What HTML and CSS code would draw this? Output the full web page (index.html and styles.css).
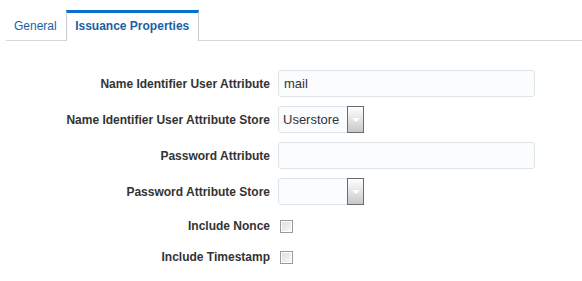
FILE: index.html
```html
<!DOCTYPE html>
<html lang="en">
<head>
    <meta charset="UTF-8">
    <title>Issuance Properties</title>
    <link rel="stylesheet" href="styles.css">
</head>
<body>
    <div class="tab-bar">
        <a class="tab">General</a>
        <a class="tab active">Issuance Properties</a>
    </div>

    <form class="props-form">
        <label class="field-label">Name Identifier User Attribute</label>
        <div class="field"><input type="text" class="text-input" value="mail"></div>

        <label class="field-label">Name Identifier User Attribute Store</label>
        <div class="field">
            <div class="select-box">
                <span class="select-value">Userstore</span>
                <span class="select-btn"></span>
            </div>
        </div>

        <label class="field-label">Password Attribute</label>
        <div class="field"><input type="text" class="text-input" value=""></div>

        <label class="field-label">Password Attribute Store</label>
        <div class="field">
            <div class="select-box">
                <span class="select-value"></span>
                <span class="select-btn"></span>
            </div>
        </div>

        <label class="field-label">Include Nonce</label>
        <div class="field"><span class="check-box"></span></div>

        <label class="field-label">Include Timestamp</label>
        <div class="field"><span class="check-box"></span></div>
    </form>
</body>
</html>
```

FILE: styles.css
```css
* {
    box-sizing: border-box;
    margin: 0;
    padding: 0;
}

body {
    background-color: #fff;
    color: #333;
    font-family: 'Liberation Sans', Arial, sans-serif;
    font-size: 12px;
}

.tab-bar {
    display: flex;
    align-items: flex-end;
    margin-left: 6px;
    padding-top: 10px;
    height: 41px;
    border-bottom: 1px solid #d0d7de;
}

.tab {
    display: block;
    height: 30px;
    padding: 3px 9px 0 8px;
    line-height: 27px;
    color: #1a5fa3;
    font-size: 12px;
    text-decoration: none;
}

.tab.active {
    width: 133px;
    height: 31px;
    margin-bottom: -1px;
    padding: 0 8px;
    background-color: #fff;
    border-top: 3px solid #0572ce;
    border-left: 1px solid #c4ccd4;
    border-right: 1px solid #c4ccd4;
    font-weight: bold;
    line-height: 27px;
    text-align: center;
}

.props-form {
    display: grid;
    grid-template-columns: 270px 1fr;
    grid-template-rows: repeat(4, 27px) 24px 20px;
    column-gap: 8px;
    row-gap: 9px;
    align-items: center;
    padding-top: 29px;
}

.field-label {
    text-align: right;
    font-weight: bold;
    color: #333;
}

.field {
    display: flex;
    align-items: center;
    height: 100%;
}

.text-input {
    width: 257px;
    height: 27px;
    padding: 0 5px;
    border: 1px solid #dfe4e8;
    border-radius: 3px;
    background-color: #fbfcfe;
    color: #333;
    font-family: 'Liberation Sans', Arial, sans-serif;
    font-size: 13px;
    outline: none;
}

.select-box {
    display: flex;
    width: 86px;
    height: 27px;
    border: 1px solid #dfe4e8;
    border-radius: 3px;
    background-color: #fbfcfe;
}

.select-value {
    flex-grow: 1;
    padding-left: 4px;
    line-height: 25px;
    font-size: 13px;
    color: #333;
}

.select-btn {
    position: relative;
    width: 17px;
    margin: -1px -1px -1px 0;
    border: 1px solid #6b6b6b;
    background: linear-gradient(#ffffff, #c8c8c8);
}

.select-btn::after {
    content: '';
    position: absolute;
    left: 4px;
    top: 11px;
    border-left: 4px solid transparent;
    border-right: 4px solid transparent;
    border-top: 4px solid #fff;
}

.check-box {
    display: block;
    width: 13px;
    height: 13px;
    margin-left: 2px;
    border: 1px solid #9a9a9a;
    background: linear-gradient(135deg, #dcdcdc, #fafafa);
    box-shadow: inset 0 0 0 1px #fff;
}
```
